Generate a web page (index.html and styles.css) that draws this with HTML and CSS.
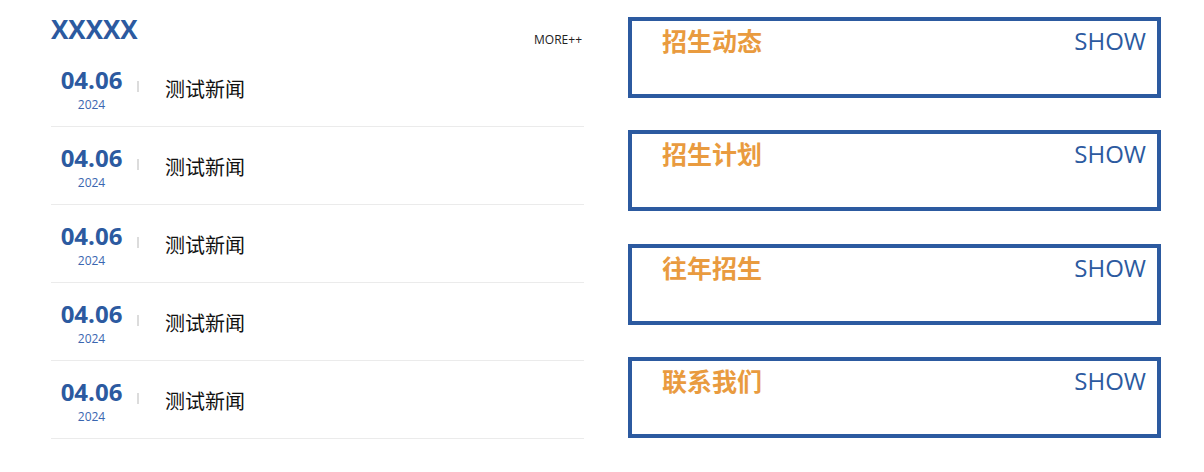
FILE: index.html
```html
<!DOCTYPE html>
<html lang="zh">
<head>
<meta charset="utf-8">
<title>News</title>
<link rel="stylesheet" href="styles.css">
</head>
<body>
<div class="page">
  <section class="news">
    <div class="news-head">
      <h2 class="news-title">XXXXX</h2>
      <a class="more" href="#">MORE++</a>
    </div>
    <ul class="news-list">
      <li class="news-item"><div class="date"><div class="md">04.06</div><div class="yr">2024</div></div><span class="sep"></span><span class="ntitle">测试新闻</span></li>
      <li class="news-item"><div class="date"><div class="md">04.06</div><div class="yr">2024</div></div><span class="sep"></span><span class="ntitle">测试新闻</span></li>
      <li class="news-item"><div class="date"><div class="md">04.06</div><div class="yr">2024</div></div><span class="sep"></span><span class="ntitle">测试新闻</span></li>
      <li class="news-item"><div class="date"><div class="md">04.06</div><div class="yr">2024</div></div><span class="sep"></span><span class="ntitle">测试新闻</span></li>
      <li class="news-item"><div class="date"><div class="md">04.06</div><div class="yr">2024</div></div><span class="sep"></span><span class="ntitle">测试新闻</span></li>
    </ul>
  </section>
  <section class="boxes">
    <div class="box"><span class="box-title">招生动态</span><span class="show">SHOW</span></div>
    <div class="box"><span class="box-title">招生计划</span><span class="show">SHOW</span></div>
    <div class="box"><span class="box-title">往年招生</span><span class="show">SHOW</span></div>
    <div class="box"><span class="box-title">联系我们</span><span class="show">SHOW</span></div>
  </section>
</div>
</body>
</html>
```
FILE: styles.css
```css
* { box-sizing: border-box; }
body {
  margin: 0;
  background: #fff;
  font-family: "Open Sans", "Noto Sans CJK SC", sans-serif;
}
.page {
  display: flex;
  gap: 44px;
  padding: 0 0 0 51px;
}
.news { width: 533px; }
.news-head {
  display: flex;
  justify-content: space-between;
  align-items: flex-end;
  height: 49px;
}
.news-title {
  margin: 0;
  font-size: 26px;
  font-weight: 700;
  color: #2c5aa0;
  line-height: 1;
  align-self: flex-start;
  margin-top: 16px;
}
.more {
  font-size: 12px;
  color: #222;
  text-decoration: none;
  margin-bottom: 1px;
  margin-right: 2px;
}
.news-list { list-style: none; margin: 0; padding: 0; }
.news-item {
  display: flex;
  align-items: center;
  height: 78px;
  border-bottom: 1px solid #ebebeb;
}
.date {
  width: 81px;
  text-align: center;
  color: #2c5aa0;
  margin-top: 6px;
}
.md { font-size: 24px; font-weight: 700; line-height: 28px; margin-top: -2px; }
.yr { font-size: 12px; line-height: 18px; margin-top: 2px; color: #3a66b0; }
.sep {
  width: 2px;
  height: 11px;
  background: #dcdcdc;
  margin-left: 5px;
  margin-top: -2px;
}
.ntitle {
  margin-left: 26px;
  font-size: 20px;
  color: #111;
  margin-top: 2px;
}
.boxes {
  width: 533px;
  padding-top: 17px;
  display: flex;
  flex-direction: column;
  gap: 32.3px;
}
.box {
  height: 81px;
  border: 4px solid #2c5aa0;
  display: flex;
  justify-content: space-between;
  align-items: flex-start;
  padding: 2px 11px 0 30px;
}
.box-title {
  font-size: 25px;
  font-weight: 700;
  color: #e99b3f;
  line-height: 37px;
}
.show {
  font-size: 24px;
  color: #2c5aa0;
  line-height: 36px;
}
```
